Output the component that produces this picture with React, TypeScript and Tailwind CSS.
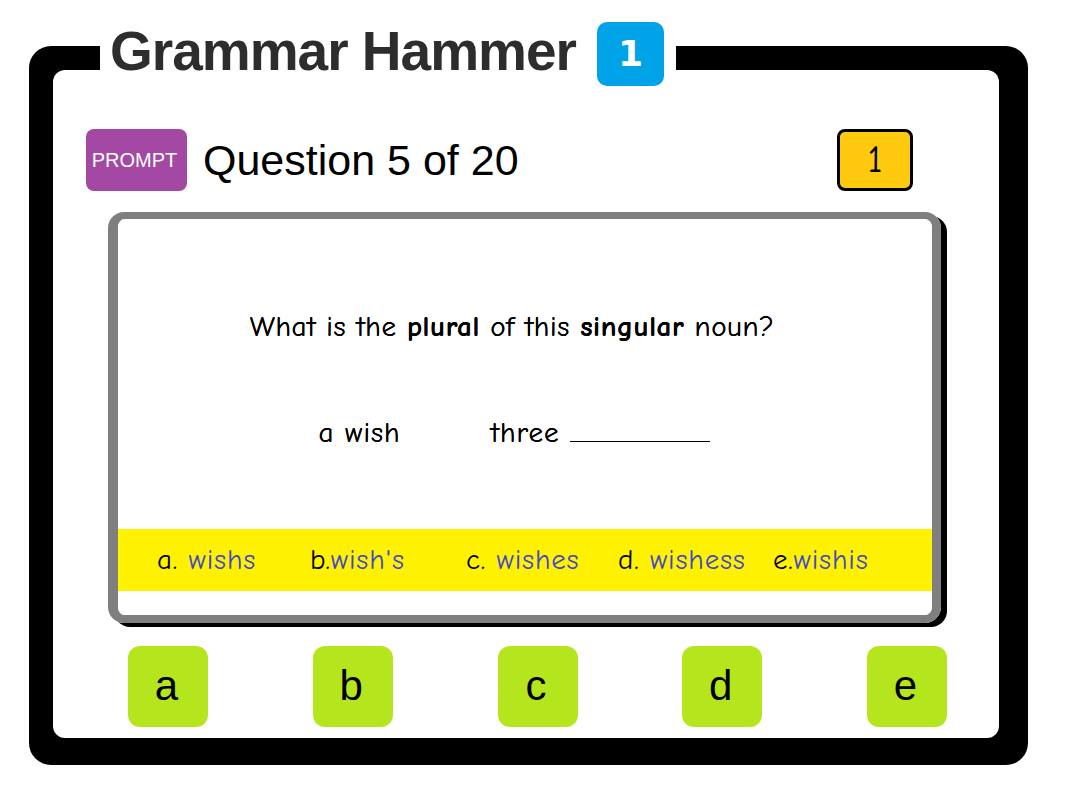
const comic = "font-['Comic_Sans_MS','Comic_Neue','DejaVu_Sans',sans-serif]";
const arial = "font-['Liberation_Sans',Arial,sans-serif]";

const options = [
  { label: 'a. ', word: 'wishs' },
  { label: 'b.', word: "wish's" },
  { label: 'c. ', word: 'wishes' },
  { label: 'd. ', word: 'wishess' },
  { label: 'e.', word: 'wishis' },
];

export default function App() {
  return (
    <div className="relative min-h-[800px] w-[1068px] bg-white pl-[29px] pt-[46px]">
      {/* title sits over the top edge of the frame */}
      <div className="absolute left-[100px] top-[14px] flex h-[80px] items-start bg-white pl-[10px] pr-[12px]">
        <h1
          className={`${arial} mt-[10px] text-[55px] font-bold leading-none tracking-[-1px] text-[#2d2d2d]`}
        >
          Grammar Hammer
        </h1>
        <div className="ml-[21px] mt-[8px] flex h-[64px] w-[67px] items-center justify-center rounded-[10px] bg-[#00a2e8]">
          <span className="font-['DejaVu_Sans',sans-serif] text-[36px] font-bold leading-none text-white">1</span>
        </div>
      </div>

      <div className="w-[999px] rounded-[22px] bg-black pb-[27px] pl-[24px] pr-[29px] pt-[24px]">
        <div className="flex h-[668px] flex-col rounded-[12px] bg-white">
          {/* header */}
          <div className="mt-[59px] flex h-[62px] items-center pl-[33px] pr-[86px]">
            <button
              className={`${arial} flex h-[62px] w-[101px] items-center justify-center rounded-[8px] bg-[#a349a4] pr-[4px] text-[20px] text-white`}
            >
              PROMPT
            </button>
            <span className={`${arial} ml-[16px] text-[43px] leading-none text-black`}>Question 5 of 20</span>
            <div
              className={`${comic} ml-auto flex h-[62px] w-[76px] items-center justify-center rounded-[8px] border-[3px] border-black bg-[#ffc90e] text-[38px] leading-none text-black`}
            >
              1
            </div>
          </div>

          {/* question card */}
          <div className="ml-[55px] mt-[21px] h-[411px] w-[833px] rounded-[16px] border-b-[8px] border-l-[10px] border-r-[9px] border-t-[7px] border-[#7f7f7f] shadow-[6px_4px_0_#000]">
            <div className={`${comic} flex h-full flex-col rounded-[8px] bg-white text-black`}>
              <p className="pr-[26px] pt-[92px] text-center text-[29px] leading-[32px] tracking-[0.6px] [text-shadow:0_0_0.4px_#000]">
                What is the <b>plural</b> of this <b>singular</b> noun?
              </p>
              <div className="mt-[74px] flex items-baseline justify-center pr-[22px] text-[29px] leading-[32px] tracking-[1px] [text-shadow:0_0_0.4px_#000]">
                <span>a wish</span>
                <span className="ml-[90px]">three</span>
                <span className="mb-[-4px] ml-[10px] inline-block w-[140px] border-b-[1.5px] border-black" />
              </div>
              <div className="mb-[24px] mt-auto grid h-[62px] grid-cols-[153px_156px_152px_155px_auto] items-center bg-[#fff200] pl-[39px] text-[29px] tracking-[0.8px]">
                {options.map((o) => (
                  <span key={o.word} className="whitespace-pre">
                    {o.label}
                    <span className="text-[#3f48cc]">{o.word}</span>
                  </span>
                ))}
              </div>
            </div>
          </div>

          {/* answer buttons */}
          <div className="ml-[75px] mt-[23px] flex gap-[104.75px]">
            {['a', 'b', 'c', 'd', 'e'].map((l) => (
              <button
                key={l}
                className={`${arial} flex h-[81px] w-[80px] items-center justify-center rounded-[12px] bg-[#b5e61d] pb-[2px] pr-[3px] text-[42px] leading-none text-black`}
              >
                {l}
              </button>
            ))}
          </div>
        </div>
      </div>
    </div>
  );
}
